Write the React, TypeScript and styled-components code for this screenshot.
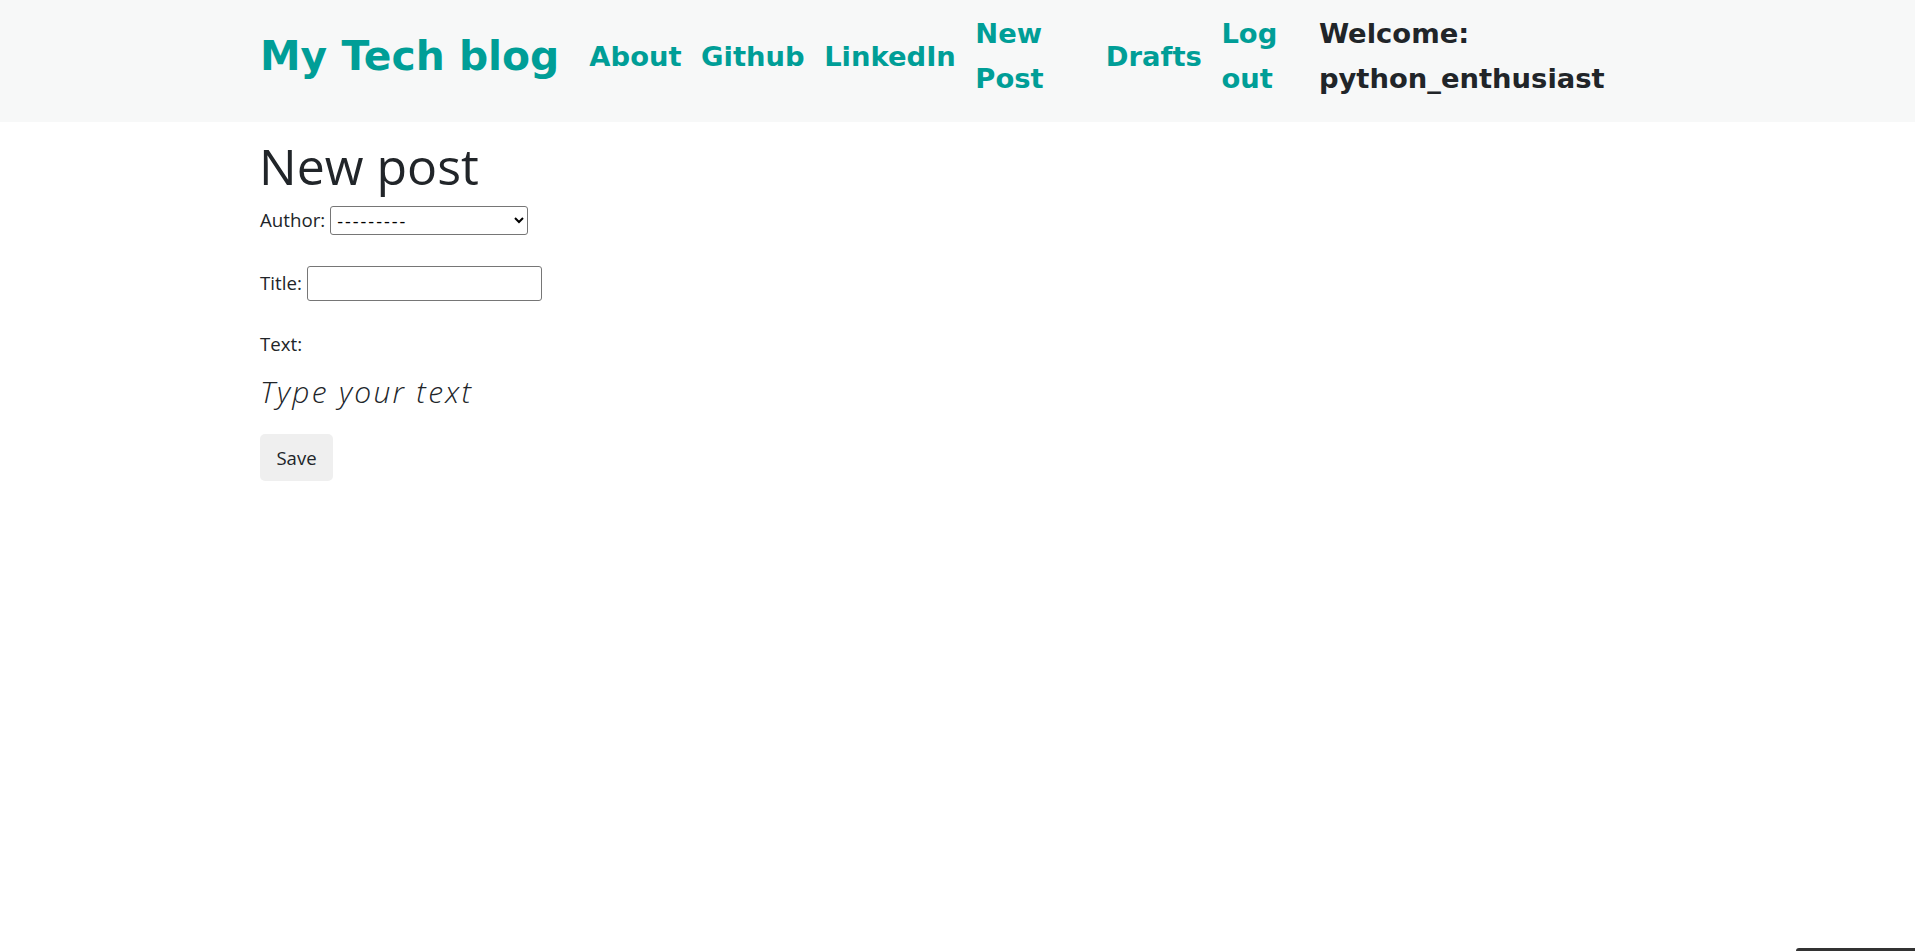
import React from "react";
import styled, { createGlobalStyle } from "styled-components";

const GlobalStyle = createGlobalStyle`
  html, body {
    margin: 0;
    padding: 0;
    background: #ffffff;
    color: #212529;
    font-family: "Open Sans", "Noto Sans", sans-serif;
  }
  * { box-sizing: border-box; }
`;

const Header = styled.header`
  height: 122px;
  background: #f7f8f8;
  display: flex;
  align-items: center;
  padding: 0 0 10px 260px;
`;

const Logo = styled.a`
  font-family: "DejaVu Sans", sans-serif;
  font-weight: 700;
  font-size: 40.8px;
  line-height: 1.2;
  color: #009e97;
  text-decoration: none;
  white-space: nowrap;
`;

const Nav = styled.nav`
  display: flex;
  align-items: center;
  gap: 19.5px;
  margin-left: 30px;
`;

const NavItem = styled.a<{ $width?: number; $dark?: boolean }>`
  font-family: "DejaVu Sans", sans-serif;
  font-weight: 700;
  font-size: 27.4px;
  line-height: 45px;
  color: ${(p) => (p.$dark ? "#212529" : "#009e97")};
  text-decoration: none;
  width: ${(p) => (p.$width ? `${p.$width}px` : "auto")};
  white-space: ${(p) => (p.$width ? "normal" : "nowrap")};
  flex-shrink: 0;
`;

const Main = styled.main`
  padding: 16px 0 0 260px;
`;

const Title = styled.h1`
  font-family: "Open Sans", sans-serif;
  font-weight: 400;
  font-size: 50px;
  line-height: 1.2;
  margin: -2px 0 0 -1px;
`;

const Form = styled.form`
  display: flex;
  flex-direction: column;
  align-items: flex-start;
`;

const Field = styled.div<{ $top: number }>`
  display: flex;
  align-items: center;
  gap: 5px;
  margin-top: ${(p) => p.$top}px;
`;

const Label = styled.label`
  font-size: 18.7px;
  line-height: 1.5;
  color: #212529;
`;

const Select = styled.select`
  width: 198px;
  height: 29px;
  font-family: "Open Sans", sans-serif;
  font-size: 18px;
  letter-spacing: 2px;
  border: 1px solid #767676;
  border-radius: 3px;
  background: #fff;
  color: #000;
  padding: 0 2px;
`;

const Input = styled.input`
  width: 235px;
  height: 35px;
  border: 1px solid #767676;
  border-radius: 3px;
  background: #fff;
  font-size: 18px;
`;

const Editor = styled.div`
  font-family: "Open Sans", sans-serif;
  font-weight: 300;
  font-style: italic;
  font-size: 30px;
  letter-spacing: 2.3px;
  line-height: 42px;
  color: #212529;
  margin-top: 13px;
`;

const SaveButton = styled.button`
  margin-top: 21px;
  width: 73px;
  height: 47px;
  border: none;
  border-radius: 5px;
  background: #efefef;
  color: #212529;
  font-family: "Open Sans", sans-serif;
  font-size: 18.5px;
  padding: 0;
`;

const CornerTab = styled.div`
  position: fixed;
  right: 0;
  bottom: 0;
  width: 119px;
  height: 3px;
  background: #333;
  border-top-left-radius: 4px;
`;

export default function App() {
  return (
    <>
      <GlobalStyle />
      <Header>
        <Logo href="#">My Tech blog</Logo>
        <Nav>
          <NavItem href="#">About</NavItem>
          <NavItem href="#">Github</NavItem>
          <NavItem href="#">LinkedIn</NavItem>
          <NavItem href="#" $width={111}>New Post</NavItem>
          <NavItem href="#">Drafts</NavItem>
          <NavItem href="#" $width={78}>Log out</NavItem>
          <NavItem as="span" $dark $width={310}>Welcome: python_enthusiast</NavItem>
        </Nav>
      </Header>
      <Main>
        <Title>New post</Title>
        <Form onSubmit={(e) => e.preventDefault()}>
          <Field $top={10}>
            <Label htmlFor="author">Author:</Label>
            <Select id="author" defaultValue="">
              <option value="">---------</option>
            </Select>
          </Field>
          <Field $top={31}>
            <Label htmlFor="title">Title:</Label>
            <Input id="title" type="text" />
          </Field>
          <Field $top={29}>
            <Label>Text:</Label>
          </Field>
          <Editor>Type your text</Editor>
          <SaveButton type="submit">Save</SaveButton>
        </Form>
      </Main>
      <CornerTab />
    </>
  );
}
